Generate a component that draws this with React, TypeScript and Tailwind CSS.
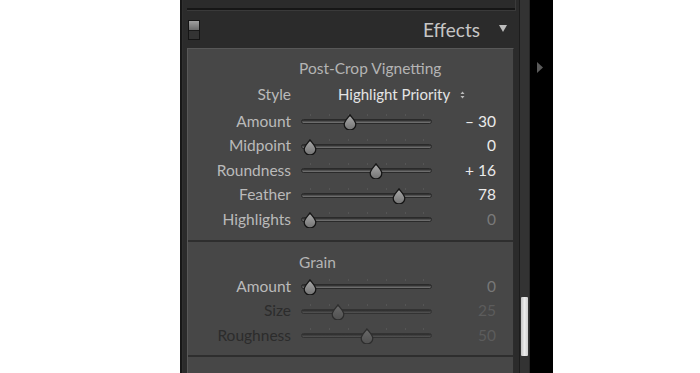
import React from "react";

const font = { fontFamily: "Lato, 'Open Sans', sans-serif" };

function Thumb({ dim }: { dim?: boolean }) {
  const id = dim ? "gd" : "ge";
  return (
    <svg width="14" height="16" viewBox="0 0 14 16">
      <defs>
        <linearGradient id={id} x1="0" y1="0" x2="0" y2="1">
          <stop offset="0" stopColor={dim ? "#6a6a6a" : "#acacac"} />
          <stop offset="1" stopColor={dim ? "#505050" : "#727272"} />
        </linearGradient>
      </defs>
      <path
        d="M7 0.8 C6 2.5 1.2 7 1.2 10.2 A5.8 5.8 0 0 0 12.8 10.2 C12.8 7 8 2.5 7 0.8 Z"
        fill={`url(#${id})`}
        stroke={dim ? "#2e2e2e" : "#151515"}
        strokeWidth="1.3"
      />
    </svg>
  );
}

const ticks = [9, 28, 47, 66, 85, 104, 122];

function Slider({ pos, dim }: { pos: number; dim?: boolean }) {
  return (
    <div className="relative w-[131px] h-full flex items-center">
      {ticks.map((t) => (
        <div
          key={t}
          className="absolute top-[5px] w-[1px] h-[2px] bg-[#555555]"
          style={{ left: t }}
        />
      ))}
      <div
        className={
          dim
            ? "w-full h-[5px] mt-[1px] rounded-full bg-[linear-gradient(to_bottom,#2a2a2a,#555555)] border border-[#333333]"
            : "w-full h-[5px] mt-[1px] rounded-full bg-[linear-gradient(to_bottom,#262626,#7a7a7a)] border border-[#2a2a2a]"
        }
      />
      <div className="absolute top-[5px]" style={{ left: pos - 7 }}>
        <Thumb dim={dim} />
      </div>
    </div>
  );
}

type Row = {
  label: string;
  value: string;
  pos: number;
  labelColor: string;
  valueColor: string;
  dim?: boolean;
};

function SliderRow({ r }: { r: Row }) {
  return (
    <div className="flex items-center h-[24.5px]">
      <div className={`w-[103px] text-right text-[15.5px] leading-none ${r.labelColor}`}>
        {r.label}
      </div>
      <div className="ml-[10px] h-full">
        <Slider pos={r.pos} dim={r.dim} />
      </div>
      <div className={`w-[64px] text-right text-[15.5px] leading-none ${r.valueColor}`}>
        {r.value}
      </div>
    </div>
  );
}

const vignette: Row[] = [
  { label: "Amount", value: "– 30", pos: 48.5, labelColor: "text-[#bababa]", valueColor: "text-[#ebebeb]" },
  { label: "Midpoint", value: "0", pos: 9, labelColor: "text-[#bababa]", valueColor: "text-[#ebebeb]" },
  { label: "Roundness", value: "+ 16", pos: 74.5, labelColor: "text-[#bababa]", valueColor: "text-[#ebebeb]" },
  { label: "Feather", value: "78", pos: 97.5, labelColor: "text-[#bababa]", valueColor: "text-[#ebebeb]" },
  { label: "Highlights", value: "0", pos: 9, labelColor: "text-[#bababa]", valueColor: "text-[#7a7a7a]" },
];

const grain: Row[] = [
  { label: "Amount", value: "0", pos: 9, labelColor: "text-[#bababa]", valueColor: "text-[#787878]" },
  { label: "Size", value: "25", pos: 37, labelColor: "text-[#2c2c2c]", valueColor: "text-[#5c5c5c]", dim: true },
  { label: "Roughness", value: "50", pos: 65.5, labelColor: "text-[#2c2c2c]", valueColor: "text-[#5c5c5c]", dim: true },
];

export default function App() {
  return (
    <div className="w-[700px] h-[373px] bg-white flex overflow-hidden" style={font}>
      <div className="w-[180px] shrink-0" />
      <div className="w-[2px] shrink-0 bg-[#171717]" />
      <div className="w-[1px] shrink-0 bg-[#303030]" />
      {/* panel column */}
      <div className="w-[336px] shrink-0 bg-[#2b2b2b] flex flex-col pl-[4px] pr-[5px]">
        {/* previous panel bottom */}
        <div className="h-[11px] shrink-0 mr-[-2px] border-r border-b border-[#3a3a3a] shadow-[inset_0_-2px_0_#161616]" />
        {/* header */}
        <div className="h-[37px] shrink-0 flex items-center">
          <div className="ml-[1px] w-[12px] h-[20px] border border-[#141414] flex flex-col">
            <div className="h-1/2 bg-[linear-gradient(to_bottom,#a0a0a0,#6a6a6a)]" />
            <div className="h-1/2 bg-[#333333] border-t border-[#1a1a1a]" />
          </div>
          <div className="flex-1" />
          <div className="text-[19px] leading-none text-[#c6c6c6] pb-[1px]">Effects</div>
          <svg width="8" height="7" viewBox="0 0 8 7" className="ml-[19px] mr-[7px] mb-[3px]">
            <path d="M0 0 H8 L4 7 Z" fill="#bdbdbd" />
          </svg>
        </div>
        {/* content */}
        <div className="flex-1 bg-[#474747] border-t border-l border-[#585858] border-r border-r-[#2c2c2c]">
          <div className="pt-[8px]">
            <div className="h-[22.5px] flex items-center pl-[111px] text-[15.5px] leading-none text-[#b4b4b4]">
              Post-Crop Vignetting
            </div>
            <div className="h-[29.5px] flex items-center">
              <div className="w-[103px] text-right text-[15.5px] leading-none text-[#bababa]">Style</div>
              <div className="ml-[47px] text-[15px] leading-none text-[#e4e4e4]">Highlight Priority</div>
              <svg width="5" height="8" viewBox="0 0 5 8" className="ml-[10px] mt-[2px]">
                <path d="M0.5 3 L2.5 0.5 L4.5 3 Z M0.5 5 L2.5 7.5 L4.5 5 Z" fill="#bcbcbc" />
              </svg>
            </div>
            {vignette.map((r) => (
              <SliderRow key={r.label} r={r} />
            ))}
          </div>
          <div className="h-[8.5px]" />
          <div className="h-[2px] bg-[#2e2e2e]" />
          <div className="pt-[9px] pb-[7.5px]">
            <div className="h-[23px] flex items-center pl-[111px] text-[15.5px] leading-none text-[#b4b4b4]">
              Grain
            </div>
            {grain.map((r) => (
              <SliderRow key={r.label + r.value} r={r} />
            ))}
          </div>
          <div className="h-[2px] bg-[#2e2e2e]" />
        </div>
      </div>
      {/* scroll track */}
      <div className="w-[11px] shrink-0 bg-[#333333] border-l border-[#1c1c1c] border-r border-r-[#262626] flex flex-col">
        <div className="h-[297px]" />
        <div className="mx-[1px] h-[59px] rounded-[1px] bg-[linear-gradient(to_right,#c4c4c4,#ececec,#cfcfcf)]" />
      </div>
      {/* black side */}
      <div className="w-[23px] shrink-0 bg-black flex flex-col items-start">
        <svg width="6" height="11" viewBox="0 0 6 11" className="mt-[62px] ml-[7px]">
          <path d="M0 0 L6 5.5 L0 11 Z" fill="#5a5a5a" />
        </svg>
      </div>
      <div className="flex-1" />
    </div>
  );
}
